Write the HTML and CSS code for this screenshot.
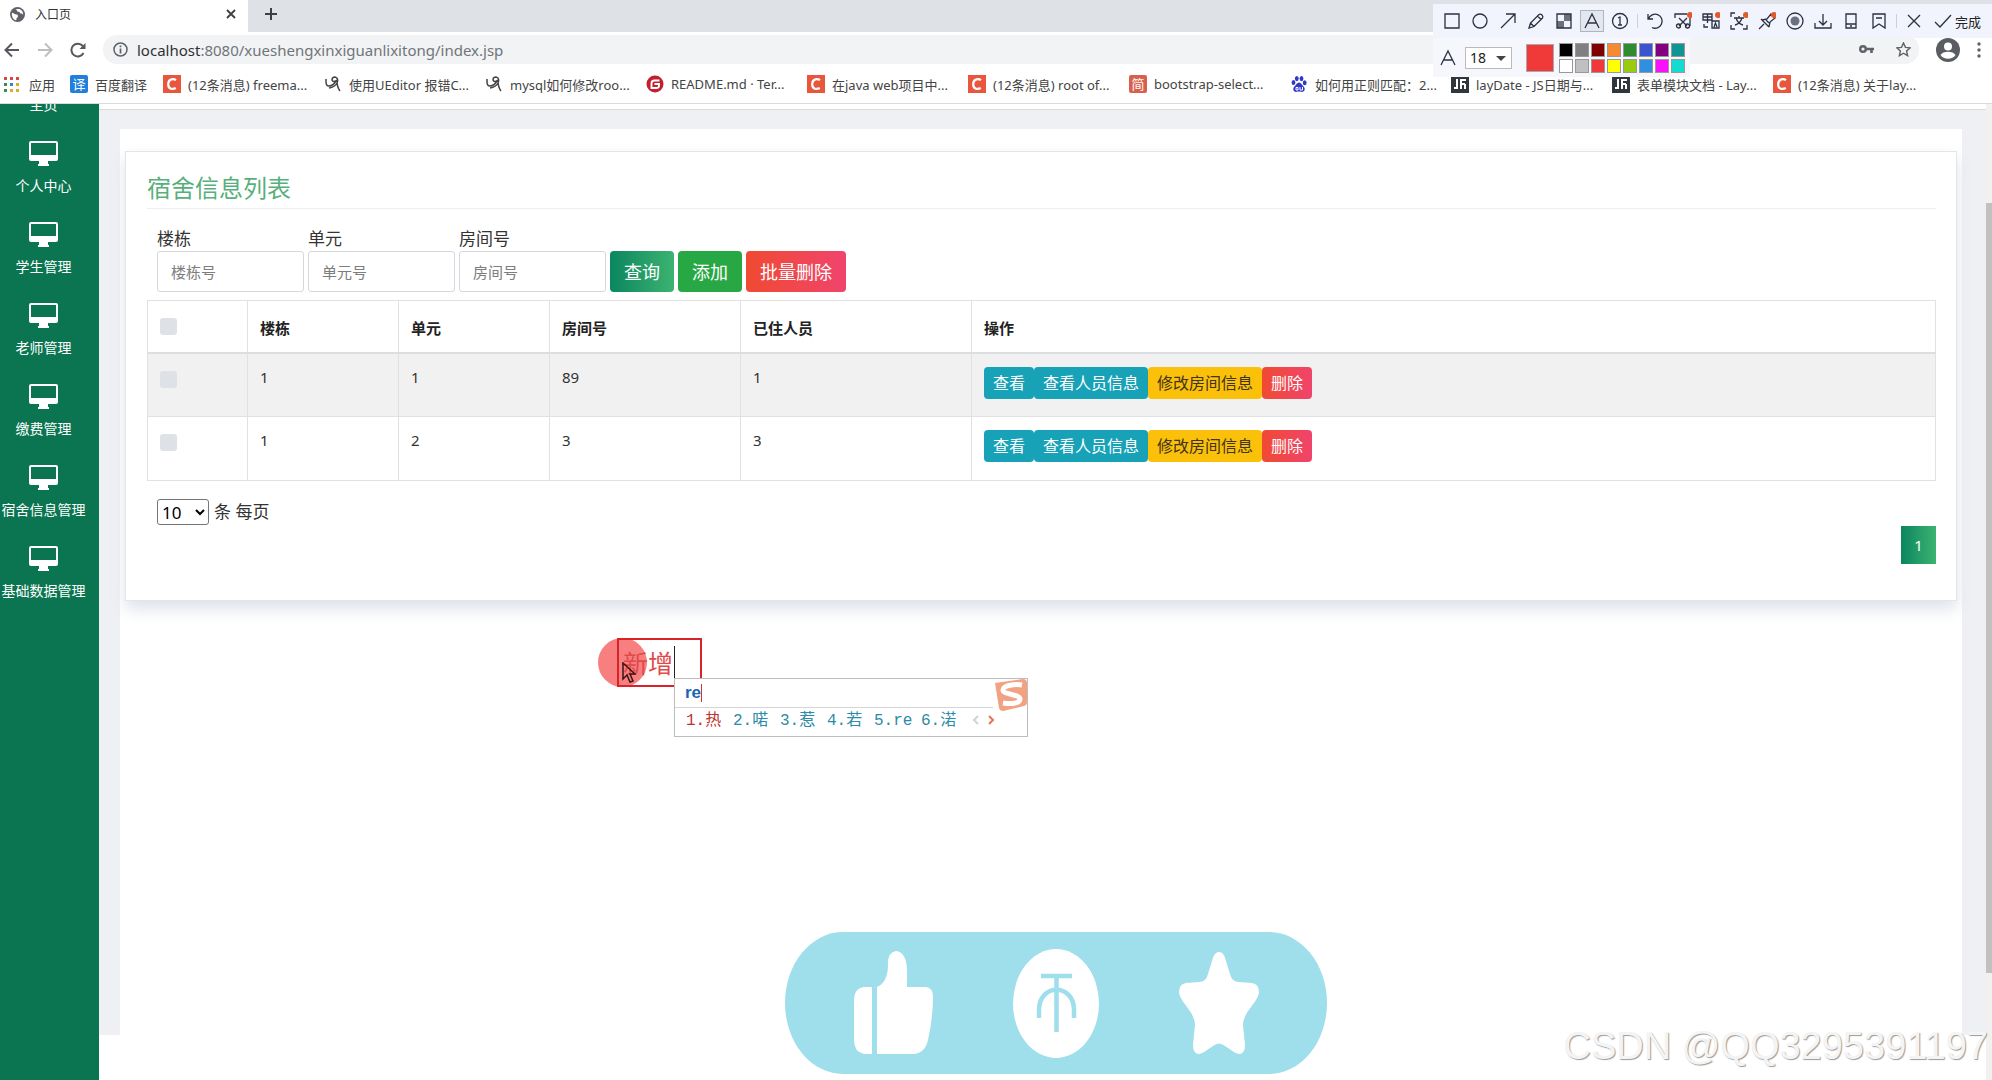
FILE: index.html
```html
<!DOCTYPE html>
<html lang="zh-CN">
<head>
<meta charset="utf-8">
<meta name="viewport" content="width=device-width, initial-scale=1">
<title>入口页</title>
<link rel="stylesheet" href="styles.css">
</head>
<body>
<svg class="sprite" aria-hidden="true">
  <symbol id="desktop" viewBox="0 0 29 25"><path fill="currentColor" fill-rule="evenodd" d="M2 0h25a2 2 0 0 1 2 2v16a2 2 0 0 1-2 2h-8v3h1v2H9v-2h1v-3H2a2 2 0 0 1-2-2V2a2 2 0 0 1 2-2zM2 2v12h25V2z"/></symbol>
  <symbol id="csdn" viewBox="0 0 18 18"><path fill="#e8573d" d="M0 0h18v18H0z"/><path fill="none" stroke="#fff" stroke-width="2.2" d="M13 5.2C11 3.800 5.500 3.200 5.200 9s5 5.500 7.600 4"/></symbol>
  <symbol id="swirl" viewBox="0 0 18 18"><path fill="none" stroke="#444" stroke-width="1.500" d="M2 4v3q0 4 3 4 4 0 7-5M5 13q6-1 8-5 2-5-2-6-3 0-3 3 1 3 5 0M13 6q0 6 3 10"/></symbol>
  <symbol id="lay" viewBox="0 0 18 18"><path fill="#2f363c" d="M0 0h18v18H0z"/><path fill="none" stroke="#fff" stroke-width="2" d="M3 13h4M6 4v10M10 14V5h5M10 9h4M14 9v5"/></symbol>
</svg>

<header class="browser">
  <div class="tabs">
    <div class="tab">
      <svg width="15" height="15" viewBox="0 0 16 16"><circle cx="8" cy="8" r="8" fill="#5f6368"/><path fill="#fff" d="M2 6c2 0 3 2 5 2s2 3 0 4c0 1 0 2-1 2C3 13 1.500 10 2 6zM6 2c2 1 1 3 3 3s1 2 3 2 2 2 2 2c.5-3-1-6-4-7z"/></svg>
      <span class="tab-title">入口页</span>
      <button class="plain" aria-label="关闭标签页"><svg width="10" height="10" viewBox="0 0 10 10"><path d="M1 1l8 8M9 1l-8 8" stroke="#3c4043" stroke-width="1.800"/></svg></button>
    </div>
    <button class="plain new-tab" aria-label="新标签页"><svg width="12" height="12" viewBox="0 0 12 12"><path d="M6 0v12M0 6h12" stroke="#3c4043" stroke-width="2"/></svg></button>
  </div>
  <div class="toolbar">
    <button class="plain" aria-label="后退"><svg width="16" height="16" viewBox="0 0 16 16" fill="none" stroke="#55585c" stroke-width="2"><path d="M15 8H2M8 1.500L1.500 8 8 14.500"/></svg></button>
    <button class="plain" aria-label="前进"><svg width="16" height="16" viewBox="0 0 16 16" fill="none" stroke="#bcbec1" stroke-width="2"><path d="M1 8h13M8 1.500L14.500 8 8 14.500"/></svg></button>
    <button class="plain" aria-label="刷新"><svg width="16" height="16" viewBox="0 0 16 16"><path d="M13.500 11A6.400 6.400 0 1 1 12.800 4" fill="none" stroke="#55585c" stroke-width="2"/><path d="M15.500 1v6h-6z" fill="#55585c"/></svg></button>
    <div class="address">
      <svg width="15" height="15" viewBox="0 0 15 15"><circle cx="7.500" cy="7.500" r="6.500" fill="none" stroke="#5f6368" stroke-width="1.500"/><path d="M7.500 6.500v5M7.500 3.500v1.700" stroke="#5f6368" stroke-width="1.700"/></svg>
      <span class="url"><b>localhost</b>:8080/xueshengxinxiguanlixitong/index.jsp</span>
      <svg width="15" height="15" viewBox="0 0 15 15"><circle cx="4" cy="7" r="2.800" fill="none" stroke="#5f6368" stroke-width="2.400"/><path d="M7 7h8M12.500 7v4" stroke="#5f6368" stroke-width="2.600"/></svg>
      <svg width="15" height="15" viewBox="0 0 16 16"><path d="M8 1l2.100 4.700 5 .5-3.800 3.400 1.100 5L8 12l-4.400 2.600 1.100-5L.9 6.200l5-.5z" fill="none" stroke="#5f6368" stroke-width="1.500"/></svg>
    </div>
    <svg width="24" height="24" viewBox="0 0 24 24"><circle cx="12" cy="12" r="12" fill="#5a5d61"/><circle cx="12" cy="8.500" r="4" fill="#fff"/><path d="M4.500 17c2-4.500 13-4.500 15 0-3 5-12 5-15 0z" fill="#fff"/></svg>
    <button class="plain" aria-label="菜单"><svg width="4" height="16" viewBox="0 0 4 16" fill="#5f6368"><circle cx="2" cy="2" r="1.700"/><circle cx="2" cy="8" r="1.700"/><circle cx="2" cy="14" r="1.700"/></svg></button>
  </div>
  <nav class="bookmarks" aria-label="书签">
    <a class="short" href="#"><svg width="15" height="15" viewBox="0 0 15 15"><path fill="#d64a3d" d="M0 0h3v3H0zM6 0h3v3H6zM12 0h3v3h-3z"/><path fill="#3a8a5a" d="M0 6h3v3H0zM0 12h3v3H0z"/><path fill="#3f7fd0" d="M6 6h3v3H6z"/><path fill="#dfa92b" d="M12 6h3v3h-3zM6 12h3v3H6zM12 12h3v3h-3z"/></svg>应用</a>
    <a class="mid" href="#"><span class="fav blue">译</span>百度翻译</a>
    <a href="#"><svg width="18" height="18"><use href="#csdn"/></svg>(12条消息) freema...</a>
    <a href="#"><svg width="18" height="18"><use href="#swirl"/></svg>使用UEditor 报错C...</a>
    <a href="#"><svg width="18" height="18"><use href="#swirl"/></svg>mysql如何修改roo...</a>
    <a href="#"><svg width="18" height="18" viewBox="0 0 18 18"><circle cx="9" cy="9" r="8.500" fill="#c2202f"/><path d="M13.500 5.500H8.500q-3 0-3 3V13h5q2.500 0 2.500-2.500V9H8.500" fill="none" stroke="#fff" stroke-width="1.900"/></svg>README.md · Ter...</a>
    <a href="#"><svg width="18" height="18"><use href="#csdn"/></svg>在java web项目中...</a>
    <a href="#"><svg width="18" height="18"><use href="#csdn"/></svg>(12条消息) root of...</a>
    <a href="#"><span class="fav red">简</span>bootstrap-select...</a>
    <a href="#"><svg width="18" height="18" viewBox="0 0 18 18" fill="#3138c8"><ellipse cx="3.500" cy="7.500" rx="1.900" ry="2.500"/><ellipse cx="6.800" cy="3.600" rx="1.900" ry="2.600"/><ellipse cx="11.500" cy="3.600" rx="1.900" ry="2.600"/><ellipse cx="14.700" cy="7.800" rx="1.900" ry="2.500"/><path d="M9 7.500c2 0 3 2.500 5 4.500 2 3-.5 5.500-3 4.800-1.500-.4-2.500-.4-4 0C4.500 17.500 2 15 4 12c2-2 3-4.500 5-4.500z"/><path d="M6 12.500h2v2.500H6zM10 12v3h2.500v-3" fill="none" stroke="#fff"/></svg>如何用正则匹配：2...</a>
    <a href="#"><svg width="18" height="18"><use href="#lay"/></svg>layDate - JS日期与...</a>
    <a href="#"><svg width="18" height="18"><use href="#lay"/></svg>表单模块文档 - Lay...</a>
    <a href="#"><svg width="18" height="18"><use href="#csdn"/></svg>(12条消息) 关于lay...</a>
  </nav>
</header>

<div class="app">
  <nav class="sidebar" aria-label="主菜单">
    <a href="#">主页</a>
    <a href="#"><svg width="29" height="25"><use href="#desktop"/></svg>个人中心</a>
    <a href="#"><svg width="29" height="25"><use href="#desktop"/></svg>学生管理</a>
    <a href="#"><svg width="29" height="25"><use href="#desktop"/></svg>老师管理</a>
    <a href="#"><svg width="29" height="25"><use href="#desktop"/></svg>缴费管理</a>
    <a href="#"><svg width="29" height="25"><use href="#desktop"/></svg>宿舍信息管理</a>
    <a href="#"><svg width="29" height="25"><use href="#desktop"/></svg>基础数据管理</a>
  </nav>

  <main class="main">
    <div class="frame">
      <div class="content">
        <section class="card">
          <h1>宿舍信息列表</h1>
          <form class="filters">
            <label>楼栋<input type="text" placeholder="楼栋号"></label>
            <label>单元<input type="text" placeholder="单元号"></label>
            <label>房间号<input type="text" placeholder="房间号"></label>
            <button type="button" class="btn query">查询</button>
            <button type="button" class="btn add">添加</button>
            <button type="button" class="btn danger">批量删除</button>
          </form>
          <table>
            <colgroup><col class="c1"><col class="c2"><col class="c2"><col class="c3"><col class="c4"><col></colgroup>
            <thead>
              <tr><th><input type="checkbox" aria-label="全选"></th><th>楼栋</th><th>单元</th><th>房间号</th><th>已住人员</th><th>操作</th></tr>
            </thead>
            <tbody>
              <tr><td><input type="checkbox" aria-label="选择第1行"></td><td>1</td><td>1</td><td>89</td><td>1</td><td><div class="actions"><button class="act info">查看</button><button class="act info">查看人员信息</button><button class="act warn">修改房间信息</button><button class="act danger">删除</button></div></td></tr>
              <tr><td><input type="checkbox" aria-label="选择第2行"></td><td>1</td><td>2</td><td>3</td><td>3</td><td><div class="actions"><button class="act info">查看</button><button class="act info">查看人员信息</button><button class="act warn">修改房间信息</button><button class="act danger">删除</button></div></td></tr>
            </tbody>
          </table>
          <label class="page-size"><select><option>10</option><option>25</option></select> 条 每页</label>
          <div class="pager"><button aria-current="page">1</button></div>
        </section>
      </div>
    </div>
  </main>
  <div class="scrollbar" aria-hidden="true"><i></i></div>
</div>

<!-- Screen annotation tool -->
<div class="capture">
  <div class="tools">
    <button class="plain" aria-label="矩形"><svg viewBox="0 0 18 18"><path d="M2 2h14v14H2z"/></svg></button>
    <button class="plain" aria-label="椭圆"><svg viewBox="0 0 18 18"><circle cx="9" cy="9" r="7"/></svg></button>
    <button class="plain" aria-label="箭头"><svg viewBox="0 0 18 18"><path d="M2 16L16 2M7 2h9v9"/></svg></button>
    <button class="plain" aria-label="画笔"><svg viewBox="0 0 18 18"><path d="M2 16l1.500-5L12 2.500q1.500-1 3 .5t.5 3L7 14.500zM10.500 4l3.500 3.500M3.500 11L7 14.500"/></svg></button>
    <button class="plain" aria-label="马赛克"><svg viewBox="0 0 18 18"><path class="solid" d="M9 2h7v7H9zM2 9h7v7H2z"/><path d="M2 2h14v14H2z"/></svg></button>
    <button class="plain active" aria-label="文字"><svg viewBox="0 0 18 18"><path d="M2 16L9 2l7 14M5 11h8"/></svg></button>
    <button class="plain" aria-label="序号"><svg viewBox="0 0 18 18"><circle cx="9" cy="9" r="7.500"/><path d="M7 6l2-1v8M7 13h4"/></svg></button>
    <i class="sep"></i>
    <button class="plain" aria-label="撤销"><svg viewBox="0 0 18 18"><path d="M2 2v5h5M2.500 7A7 7 0 1 1 6 15.500"/></svg></button>
    <button class="plain" aria-label="剪裁"><svg viewBox="0 0 18 18"><path d="M1 6V2h12M16 6v8M5 6l8 8M13 6l-8 8"/><circle cx="4.500" cy="14" r="2"/><circle cx="13.500" cy="14" r="2"/><circle class="dot" cx="16" cy="3" r="3"/></svg></button>
    <button class="plain" aria-label="翻译"><svg viewBox="0 0 18 18"><path d="M1 2h9v6H1zM1 5h9M5.500 2v9M10 9h7v7h-7zM12 15l1.500-4 1.500 4M2 12v3h4"/><circle class="dot" cx="16" cy="3" r="3"/></svg></button>
    <button class="plain" aria-label="识别文字"><svg viewBox="0 0 18 18"><path d="M1 5V1h4M1 13v4h4M17 13v4h-4M4 6h10M9 4v2M6 6q2 6 7 7M12 6q-2 6-7 7"/><circle class="dot" cx="16" cy="3" r="3"/></svg></button>
    <button class="plain" aria-label="钉住"><svg viewBox="0 0 18 18"><path d="M1 17l5-5M3 7l8 8M4 8l5-1 4-5 4 4-5 4-1 5M8 8l3 3"/><circle class="dot" cx="16" cy="3" r="3"/></svg></button>
    <button class="plain" aria-label="录制"><svg viewBox="0 0 18 18"><circle cx="9" cy="9" r="8"/><circle class="solid" cx="9" cy="9" r="4.500"/></svg></button>
    <button class="plain" aria-label="下载"><svg viewBox="0 0 18 18"><path d="M9 2v11M5 9l4 4 4-4M1 11v5h16v-5"/></svg></button>
    <button class="plain" aria-label="发送到手机"><svg viewBox="0 0 18 18"><path d="M4 2h10v14H4zM4 12h10M8 14h2"/></svg></button>
    <button class="plain" aria-label="收藏"><svg viewBox="0 0 18 18"><path d="M3 2h12v14l-6-4-6 4zM6 6h6"/></svg></button>
    <i class="sep"></i>
    <button class="plain" aria-label="取消"><svg viewBox="0 0 18 18"><path d="M3 3l12 12M15 3L3 15"/></svg></button>
    <button class="plain done"><svg viewBox="0 0 18 18"><path d="M1 10l5 5L17 3"/></svg>完成</button>
  </div>
  <div class="options">
    <svg width="18" height="18" viewBox="0 0 18 18"><path d="M2 16L9 2l7 14M5 11h8"/></svg>
    <span class="size"><select aria-label="字号"><option>18</option><option>24</option></select></span>
    <span class="current"></span>
    <div class="palette">
      <button class="black" aria-label="黑"></button><button class="gray" aria-label="灰"></button><button class="maroon" aria-label="深红"></button><button class="orange" aria-label="橙"></button><button class="green" aria-label="绿"></button><button class="blue" aria-label="蓝"></button><button class="purple" aria-label="紫"></button><button class="teal" aria-label="青"></button>
      <button class="white" aria-label="白"></button><button class="silver" aria-label="银"></button><button class="red" aria-label="红"></button><button class="yellow" aria-label="黄"></button><button class="lime" aria-label="黄绿"></button><button class="sky" aria-label="天蓝"></button><button class="magenta" aria-label="品红"></button><button class="cyan" aria-label="蓝绿"></button>
    </div>
  </div>
</div>

<div class="note">
  <i class="halo"></i>
  <div class="note-text">新增<i class="caret"></i></div>
  <svg class="pointer" width="14" height="22" viewBox="0 0 14 22"><path d="M1 1v16l4-4 3 7 3-1-3-7h5z" fill="none" stroke="#3a1414" stroke-width="1.500"/></svg>
  <div class="ime">
    <div class="typed">re<i></i></div>
    <div class="candidates"><span class="first">1.热</span><span>2.喏</span><span>3.惹</span><span>4.若</span><span>5.re</span><span>6.渃</span><svg width="28" height="10" viewBox="0 0 28 10" fill="none" stroke-width="2"><path d="M10 1L6 5l4 4" stroke="#d3d3d3"/><path d="M21 1l4 4-4 4" stroke="#e2764f"/></svg></div>
    <svg class="sogou" width="34" height="34" viewBox="0 0 34 34"><path d="M1 5L29 1q3 0 4 3v20q0 3-3 4L9 33q-3 0-4-3z" fill="#f2a183"/><path d="M28 7C22 6 9 7 9 12s17 4 17 9-10 5-17 4" fill="none" stroke="#fff" stroke-width="5"/></svg>
  </div>
</div>

<div class="reactions">
  <svg width="80" height="104" viewBox="0 0 80 104"><path fill="#fff" d="M19 36v67h-8Q1 101 1 89V50Q1 37 11 36zM24 103V36q10-4 11-20Q34 1 43 0q10 1 11 18v18h19q7 1 7 9 0 22-5 44-3 13-14 14z"/></svg>
  <svg width="86" height="109" viewBox="0 0 86 109"><ellipse cx="43" cy="54.500" rx="43" ry="54.500" fill="#fff"/><path d="M28 27h31M43.500 27v56M26 69V61C26 34 61 34 61 61v8" fill="none" stroke="#9fdeeb" stroke-width="4.500"/></svg>
  <svg width="80" height="102" viewBox="0 0 80 102"><path fill="#fff" d="M40 0q5 0 7 9l4 13q2 8 9 8l13 1q7 1 7 9 0 5-8 15-8 10-8 18l2 20q0 8-5 9-4 0-9-4l-6-4q-6-5-12 0l-6 4q-5 4-9 4-5-1-5-9l2-20q0-8-8-18-8-10-8-15 0-8 7-9l13-1q7 0 9-8l4-13q2-9 7-9z"/></svg>
</div>
<div class="watermark">CSDN @QQ3295391197</div>
</body>
</html>
```
FILE: styles.css
```css
* { box-sizing: border-box; }

body {
  margin: 0;
  min-height: 100vh;
  display: flex;
  flex-direction: column;
  position: relative;
  overflow-x: hidden;
  background: #fff;
  color: #333;
  font-family: "Noto Sans", "Noto Sans CJK SC", sans-serif;
  font-size: 15px;
}

button, input, select { font: inherit; margin: 0; }
svg { flex: none; }
.sprite { display: none; }

.plain {
  display: flex;
  align-items: center;
  justify-content: center;
  padding: 0;
  border: 0;
  background: none;
}

/* Browser chrome */
.browser { border-bottom: 1px solid #d9dadc; }

.tabs {
  display: flex;
  height: 32px;
  background: #dee1e6;
}

.tab {
  display: flex;
  align-items: center;
  gap: 10px;
  width: 248px;
  padding: 0 12px 4px 10px;
  background: #fff;
}

.tab-title { flex: 1; font-size: 12px; }

.new-tab {
  width: 46px;
  padding-bottom: 4px;
}

.toolbar {
  display: flex;
  align-items: center;
  gap: 17px;
  height: 37px;
  padding: 0 11px 2px 4px;
}

.address {
  display: flex;
  align-items: center;
  gap: 22px;
  flex: 1;
  height: 29px;
  padding: 0 8px 0 10px;
  border-radius: 14px;
  background: #f1f3f4;
}

.url { flex: 1; margin-left: -13px; color: #70757a; font-size: 15px; }
.url b { color: #303134; font-weight: 400; }

.bookmarks {
  display: flex;
  align-items: center;
  height: 34px;
  padding: 0 0 4px 4px;
  overflow: hidden;
}

.bookmarks a {
  display: flex;
  align-items: center;
  flex: none;
  gap: 7px;
  width: 161px;
  color: #444;
  font-size: 13px;
  white-space: nowrap;
  text-decoration: none;
}

.bookmarks .short { gap: 10px; width: 66px; }
.bookmarks .mid { width: 93px; }

.fav {
  width: 18px;
  height: 18px;
  border-radius: 2px;
  color: #fff;
  font-size: 13px;
  line-height: 18px;
  text-align: center;
}

.fav.blue { background: #2080dc; }
.fav.red { background: #d9604c; }

/* Application */
.app { display: flex; flex: 1; }

.sidebar {
  display: flex;
  flex-direction: column;
  gap: 26px;
  flex: none;
  width: 99px;
  padding-right: 12px;
  overflow: hidden;
  background: #0a7550;
}

.sidebar a {
  display: flex;
  flex-direction: column;
  align-items: center;
  gap: 10px;
  color: #fff;
  font-size: 14px;
  line-height: 20px;
  white-space: nowrap;
  text-decoration: none;
}

.sidebar a:first-child { margin-top: -9px; }

.main {
  display: flex;
  flex: 1;
  min-width: 0;
  padding: 5px 0 45px;
}

.frame {
  display: flex;
  flex: 1;
  min-width: 0;
  padding: 19px 24px 0 21px;
  border-top: 1px solid #d9dadc;
  background: #eff0f4;
}

.content {
  flex: 1;
  min-width: 0;
  padding: 22px 5px;
  background: #fff;
}

.card {
  padding: 18px 20px 36px 21px;
  border: 1px solid #e3e5ea;
  background: #fff;
  box-shadow: 0 8px 16px #dfe1ea;
}

.card h1 {
  margin: 0 0 17px;
  padding-bottom: 2px;
  border-bottom: 1px solid #eee;
  color: #57b07c;
  font-size: 24px;
  font-weight: 400;
  line-height: 36px;
}

.filters {
  display: flex;
  align-items: flex-end;
  gap: 4px;
  margin-bottom: 8px;
  padding-left: 10px;
}

.filters label {
  display: flex;
  flex-direction: column;
  width: 147px;
  font-size: 17px;
  line-height: 25px;
}

.filters input {
  width: 100%;
  height: 41px;
  padding: 0 13px;
  border: 1px solid #d5d8dc;
  border-radius: 3px;
  font-size: 15px;
}

.filters input::placeholder { color: #7d7d7d; }

.btn {
  height: 41px;
  padding: 0 14px;
  border: 0;
  border-radius: 4px;
  color: #fff;
  font-size: 18px;
  line-height: 24px;
}

.query { background: linear-gradient(90deg, #0b865f, #3cb371); }
.add { background: #28a745; }
.danger { background: linear-gradient(90deg, #f04a33, #f0446c); }

table {
  width: 100%;
  border-collapse: collapse;
  table-layout: fixed;
}

.c1 { width: 100px; }
.c2 { width: 151px; }
.c3 { width: 191px; }
.c4 { width: 231px; }

th, td {
  padding: 11px 12px;
  border: 1px solid #dfe1e4;
  text-align: left;
  vertical-align: top;
  font-size: 15px;
  line-height: 24px;
}

th { height: 52px; padding-top: 15px; border-bottom: 2px solid #dcdee1; color: #222; }
td { height: 64px; }
tbody tr:first-child { background: #f1f1f1; }

td:first-child, th:first-child { line-height: 0; }
th:first-child, td:first-child { padding-top: 17px; }

input[type="checkbox"] {
  width: 17px;
  height: 17px;
  border-radius: 3px;
  appearance: none;
  background: #dee2e6;
}

.actions { display: flex; padding-top: 2px; }

.act {
  height: 32px;
  padding: 0 9px;
  border: 0;
  border-radius: 4px;
  color: #fff;
  font-size: 16px;
  line-height: 24px;
}

.info { background: #17a2b8; }
.warn { background: #fbc00a; color: #40351a; }

.page-size {
  display: flex;
  align-items: center;
  gap: 5px;
  margin-top: 18px;
  padding-left: 10px;
  font-size: 17px;
  line-height: 26px;
}

.page-size select {
  width: 52px;
  height: 26px;
  border: 1px solid #767676;
  border-radius: 3px;
  background: #fff;
}

.pager { display: flex; justify-content: flex-end; margin-top: 1px; }

.pager button {
  width: 35px;
  height: 38px;
  border: 0;
  background: linear-gradient(90deg, #0b865f, #3cb371);
  color: #fff;
}

.scrollbar {
  display: flex;
  flex-direction: column;
  width: 6px;
  background: #f1f1f1;
}

.scrollbar::before { content: ""; flex: 99; }
.scrollbar::after { content: ""; flex: 107; }
.scrollbar i { flex: 770; background: #c1c1c1; }

/* Screen annotation tool, floating over the page */
.capture { position: absolute; top: 4px; right: 0; width: 559px; }

.tools {
  display: flex;
  align-items: center;
  height: 34px;
  padding-left: 5px;
  background: #f1f4fd;
}

.tools .plain { flex: none; width: 28px; height: 22px; }
.tools .active { border: 1px solid #aeb4c0; background: #e3e7f0; width: 24px; margin: 0 2px; }
.tools .done { flex: 1; gap: 3px; color: #222; font-size: 13px; justify-content: flex-start; padding-left: 6px; white-space: nowrap; }
.sep { width: 1px; height: 14px; margin: 0 3px; background: #ccd0da; }

.capture svg {
  width: 18px;
  height: 18px;
  fill: none;
  stroke: #2c3040;
  stroke-width: 1.3;
}

.capture .solid { fill: #6a7080; stroke: none; }
.capture .dot { fill: #e2592a; stroke: none; }

.options {
  display: flex;
  align-items: center;
  width: 257px;
  height: 39px;
  padding-left: 6px;
  background: #f5f7fd;
}

.size { position: relative; margin: 0 14px 0 8px; }

.size::after {
  content: "";
  position: absolute;
  right: 6px;
  top: 9px;
  border: 5px solid transparent;
  border-top-color: #444;
  pointer-events: none;
}

.options select {
  display: block;
  width: 47px;
  height: 22px;
  padding: 0 4px;
  appearance: none;
  border: 1px solid #bbb;
  background: #fff;
  color: #222;
  font-size: 14px;
  line-height: 20px;
}

.current {
  width: 28px;
  height: 28px;
  margin-right: 5px;
  border: 1px solid #aaa;
  background: #f03a3a;
}

.palette { display: grid; grid-template-columns: repeat(8, 14px); gap: 2px; }
.palette button { height: 14px; padding: 0; border: 1px solid #999; }
.black { background: #000; }
.gray { background: #808080; }
.maroon { background: #800000; }
.orange { background: #f88933; }
.green { background: #2e8b30; }
.palette .blue { background: #3a55d0; }
.purple { background: #800080; }
.teal { background: #109494; }
.white { background: #fff; }
.silver { background: #c0c0c0; }
.palette .red { background: #f03a3a; }
.yellow { background: #ff0; }
.lime { background: #99cc10; }
.sky { background: #3090e0; }
.magenta { background: #fa10fa; }
.cyan { background: #14dbd0; }

/* Annotation being typed, with the input method window */
.note { position: absolute; left: 617px; top: 638px; }

.halo {
  position: absolute;
  left: -19px;
  top: 0;
  width: 49px;
  height: 49px;
  border-radius: 50%;
  background: #f77f7f;
}

.note-text {
  position: relative;
  display: flex;
  align-items: center;
  width: 85px;
  height: 49px;
  padding-left: 4px;
  border: 2px solid #d8232a;
  color: #e04a4a;
  font-size: 25px;
  line-height: 34px;
}

.caret { width: 1px; height: 34px; margin-left: 1px; background: #222; }
.pointer { position: absolute; left: 5px; top: 24px; }

.ime {
  position: absolute;
  left: 57px;
  top: 40px;
  width: 354px;
  border: 1px solid #bdbdbd;
  background: #fff;
}

.typed {
  display: flex;
  align-items: center;
  height: 29px;
  margin-right: 34px;
  padding-left: 10px;
  border-bottom: 1px solid #d5d5d5;
  color: #1766b3;
  font: bold 17px "Liberation Sans", sans-serif;
}

.typed i { width: 1px; height: 18px; background: #d33; }

.candidates {
  display: flex;
  align-items: baseline;
  height: 28px;
  padding-left: 11px;
  color: #2c8ba6;
  font: 16px/26px "Liberation Mono", "Noto Sans CJK SC", monospace;
}

.candidates span { width: 47px; }
.candidates .first { color: #c03030; }
.sogou { position: absolute; right: -1px; top: -1px; }

.reactions {
  position: absolute;
  left: 785px;
  top: 932px;
  display: flex;
  align-items: center;
  justify-content: space-between;
  width: 542px;
  height: 142px;
  padding: 0 68px;
  border-radius: 58px / 71px;
  background: #9fdeeb;
}

.watermark {
  position: absolute;
  right: 4px;
  top: 1022px;
  color: #f4f4f4;
  font-family: "Liberation Sans", sans-serif;
  font-size: 38px;
  line-height: 48px;
  text-shadow: 1px 1px 1px #999;
}
```
